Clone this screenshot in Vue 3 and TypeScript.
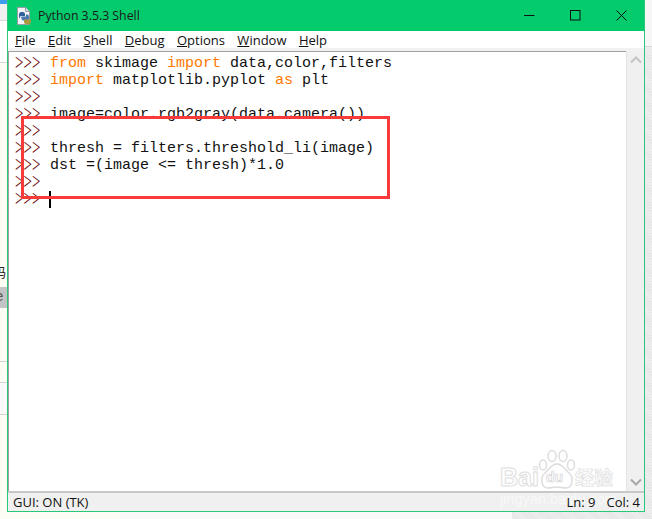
<script setup lang="ts">
const menus = [
  { k: 'F', r: 'ile' },
  { k: 'E', r: 'dit' },
  { k: 'S', r: 'hell' },
  { k: 'D', r: 'ebug' },
  { k: 'O', r: 'ptions' },
  { k: 'W', r: 'indow' },
  { k: 'H', r: 'elp' },
]
type Tok = { t: string; c?: string }
const lines: Tok[][] = [
  [{ t: 'from', c: 'kw' }, { t: ' skimage ' }, { t: 'import', c: 'kw' }, { t: ' data,color,filters' }],
  [{ t: 'import', c: 'kw' }, { t: ' matplotlib.pyplot ' }, { t: 'as', c: 'kw' }, { t: ' plt' }],
  [],
  [{ t: 'image=color.rgb2gray(data.camera())' }],
  [],
  [{ t: 'thresh = filters.threshold_li(image)' }],
  [{ t: 'dst =(image <= thresh)*1.0' }],
  [],
  [],
]
</script>

<template>
  <div class="desktop">
    <div class="left-strip">
      <div class="ls-blue"></div>
      <div class="ls-grey"></div>
      <div class="ls-white"></div>
      <div class="ls-row r1"></div>
      <div class="ls-row r2"></div>
      <span class="frag">码</span>
      <span class="frag sel">e</span>
    </div>
    <div class="window">
      <div class="titlebar">
        <svg class="appicon" width="16" height="18" viewBox="0 0 16 18">
          <path d="M1.500 0.500h8l4 4v13h-12z" fill="#f4f4f8" stroke="#9a9cac" />
          <path d="M9.500 0.500v4h4" fill="#d8d8e2" stroke="#9a9cac" />
          <path d="M3 7.500c0-2 1.500-2.500 3-2.500s3 .5 3 2v2h-3.500c-1 0-1.500 .5-1.500 1.500v1c-1 0-1-2.500-1-4z" fill="#33609c" />
          <path d="M5 11c0-1 .5-1.500 1.500-1.500h3.500v-2h1.500c1 0 1.500 1 1.500 3s-.5 3-1.500 3h-4.500c-1 0-1.500-1-1.500-2.500z" fill="#4a78ae" />
          <path d="M8 12.500h7v2c0 1.500-1.500 3-3.500 3s-3.500-1-3.500-2.500z" fill="#a89a3c" />
        </svg>
        <span class="title">Python 3.5.3 Shell</span>
        <div class="controls">
          <svg width="11" height="11" viewBox="0 0 11 11"><path d="M0 5.500h10.500" stroke="#111" stroke-width="1" /></svg>
          <svg width="11" height="11" viewBox="0 0 11 11"><rect x="0.500" y="0.500" width="9.500" height="9.500" fill="none" stroke="#111" /></svg>
          <svg width="11" height="11" viewBox="0 0 11 11"><path d="M0.500 0.500l10 10M10.500 0.500l-10 10" stroke="#111" stroke-width="1" /></svg>
        </div>
      </div>
      <div class="menubar">
        <span v-for="m in menus" :key="m.k" class="menu"><u>{{ m.k }}</u>{{ m.r }}</span>
      </div>
      <div class="editor">
        <div class="code">
          <div v-for="(l, i) in lines" :key="i" class="line">
            <span class="prompt">&gt;&gt;&gt;</span>
            <span class="src"><span v-for="(tk, j) in l" :key="j" :class="tk.c">{{ tk.t }}</span><span v-if="i === 8" class="caret"></span></span>
          </div>
          <div class="redbox"></div>
        </div>
        <div class="scroll">
          <svg width="12" height="8" viewBox="0 0 12 8"><path d="M1 6.500l5-5 5 5" fill="none" stroke="#c4c4c4" stroke-width="2" /></svg>
          <svg width="12" height="8" viewBox="0 0 12 8"><path d="M1 1.500l5 5 5-5" fill="none" stroke="#a8a8a8" stroke-width="2" /></svg>
        </div>
      </div>
      <div class="statusbar">
        <span>GUI: ON (TK)</span>
        <span class="pos"><span>Ln: 9</span><span>Col: 4</span></span>
      </div>
    </div>
    <div class="right-strip">
      <div class="rs-top"></div>
    </div>
    <div class="bottom-right"></div>
    <div class="bottom-mid"></div>
    <div class="watermark">
      <div class="wm-top">
        <span class="wm-bai">Bai</span>
        <span class="wm-paw">
          <svg width="38" height="46" viewBox="0 0 38 46">
            <g fill="#fff" stroke="#dcdcdc" stroke-width="1.500">
              <ellipse cx="5" cy="16" rx="3.500" ry="5" />
              <ellipse cx="14" cy="7" rx="4" ry="5.500" />
              <ellipse cx="25" cy="7" rx="4" ry="5.500" />
              <ellipse cx="33" cy="16" rx="3.500" ry="5" />
              <path d="M19 15c6 0 8 6 12 9 5 4 4 15-3 15-3 0-6-1-9-1s-6 1-9 1c-7 0-8-11-3-15 4-3 6-9 12-9z" />
            </g>
          </svg>
          <span class="wm-du">du</span>
        </span>
        <span class="wm-cn">经验</span>
      </div>
      <div class="wm-sub">jingyan.baidu.com</div>
    </div>
  </div>
</template>

<style>
html, body { margin: 0; padding: 0; }
</style>

<style scoped>
.desktop {
  position: relative;
  width: 652px;
  height: 519px;
  overflow: hidden;
  display: flex;
  align-items: flex-start;
  background: #fdfdf3;
  font-family: "Liberation Sans", Arial, sans-serif;
}
.left-strip {
  width: 7px;
  flex: none;
  height: 519px;
  position: relative;
  background: #fdfdf3;
  overflow: hidden;
}
.ls-blue { height: 4px; background: #3d9cec; }
.ls-grey { height: 16px; background: #f0f0f0; border-bottom: 1px solid #d8d8d8; }
.ls-white { height: 41px; background: #fff; border-bottom: 1px solid #d8d8d8; }
.ls-row { position: absolute; left: 0; right: 0; border-top: 1px solid #d4d4d4; }
.r1 { top: 361px; height: 20px; }
.r2 { top: 382px; height: 31px; background: #f9f9f9; border-bottom: 1px solid #d4d4d4; }
.frag {
  position: absolute;
  top: 262px;
  left: -7px;
  font: 13px "Noto Sans CJK SC", sans-serif;
  color: #222;
}
.sel {
  top: 287px;
  left: -5px;
  width: 12px;
  height: 21px;
  background: #c4c4c4;
  font: 15px "Liberation Sans", sans-serif;
  color: #555;
}
.window {
  width: 638px;
  height: 512px;
  flex: none;
  box-sizing: border-box;
  border: 1px solid #27c878;
  border-top: 0;
  display: flex;
  flex-direction: column;
  background: #fff;
}
.titlebar {
  height: 31px;
  flex: none;
  background: #04cc6c;
  display: flex;
  align-items: center;
  padding-left: 8px;
  color: #1a1a1a;
}
.appicon { margin-right: 6px; }
.title { font: 12.3px "Open Sans", sans-serif; }
.controls {
  margin-left: auto;
  display: flex;
  align-items: center;
  gap: 35px;
  padding-right: 17px;
}
.menubar {
  height: 17px;
  flex: none;
  box-sizing: content-box;
  background: #fff;
  display: flex;
  align-items: center;
  gap: 12.400px;
  padding: 0 0 0 7px;
  border-bottom: 3px solid #f2f2f2;
  font: 13px/17px "Open Sans", sans-serif;
  color: #111;
}
.menu { position: relative; top: 1px; }
.editor {
  flex: 1;
  min-height: 0;
  display: flex;
}
.code {
  flex: 1;
  position: relative;
  box-sizing: border-box;
  padding-top: 3px;
  background: #fff;
  border-top: 1px solid #a0a0a0;
  border-left: 1px solid #a0a0a0;
}
.line {
  height: 17px;
  display: flex;
  font: 15px/17px "Liberation Mono", monospace;
  white-space: pre;
  color: #111;
}
.prompt {
  width: 41px;
  box-sizing: border-box;
  padding-left: 6px;
  flex: none;
  color: #6a0000;
  font-family: "Liberation Serif", serif;
  transform: scaleY(1.500);
  transform-origin: 50% 55%;
}
.src { position: relative; }
.kw { color: #ff7700; }
.caret {
  display: inline-block;
  width: 2px;
  height: 17px;
  margin-left: -1px;
  background: #000;
  vertical-align: top;
}
.redbox {
  position: absolute;
  left: 12px;
  top: 64px;
  width: 363px;
  height: 77px;
  border: 3px solid #f83a3a;
  box-sizing: content-box;
  pointer-events: none;
}
.scroll {
  width: 18px;
  flex: none;
  box-sizing: border-box;
  background: #f0f0f0;
  border-left: 1px solid #e4e4e4;
  display: flex;
  flex-direction: column;
  justify-content: space-between;
  align-items: center;
  padding: 5px 0;
}
.statusbar {
  height: 20px;
  flex: none;
  box-sizing: border-box;
  background: #f0f0f0;
  border-top: 2px solid #c8c8c8;
  display: flex;
  align-items: center;
  justify-content: space-between;
  padding: 0 4px 1px 5px;
  font: 13px "Open Sans", sans-serif;
  color: #111;
}
.pos { display: flex; gap: 11px; position: relative; z-index: 2; }
.right-strip {
  width: 7px;
  height: 519px;
  flex: none;
  background: repeating-linear-gradient(45deg, #e6e6e6 0 1px, #efefef 1px 2px);
}
.rs-top {
  height: 46px;
  background: #f6f6f6;
  border-bottom: 1px solid #d8d8d8;
}
.bottom-right {
  position: absolute;
  left: 512px;
  right: 0;
  top: 512px;
  bottom: 0;
  background: repeating-linear-gradient(45deg, #e6e6e6 0 1px, #efefef 1px 2px);
}
.bottom-mid {
  position: absolute;
  left: 120px;
  width: 392px;
  top: 512px;
  bottom: 0;
  background: #f9f9f9;
}
.watermark {
  position: absolute;
  left: 500px;
  top: 449px;
  width: 116px;
  pointer-events: none;
}
.wm-top { display: flex; align-items: flex-end; height: 46px; }
.wm-bai {
  font: bold 25px/28px "Liberation Sans", sans-serif;
  color: #fff;
  -webkit-text-stroke: 1px #dedede;
  width: 38px;
  flex: none;
  margin-bottom: 4px;
}
.wm-paw { position: relative; width: 38px; height: 46px; flex: none; margin-right: -1px; }
.wm-paw svg { display: block; }
.wm-du {
  position: absolute;
  left: 8px;
  top: 19px;
  font: bold 14px/18px "Liberation Sans", sans-serif;
  color: #fff;
  -webkit-text-stroke: 0.700px #d4d4d4;
}
.wm-cn {
  font: bold 19px/24px "Noto Sans CJK SC", sans-serif;
  color: #fff;
  -webkit-text-stroke: 0.700px #dedede;
  white-space: nowrap;
  margin-bottom: 6px;
}
.wm-sub {
  font: 14.500px/14px "Liberation Sans", sans-serif;
  color: #f8f8f8;
  white-space: nowrap;
  margin-top: -3px;
  letter-spacing: 0;
}
</style>
